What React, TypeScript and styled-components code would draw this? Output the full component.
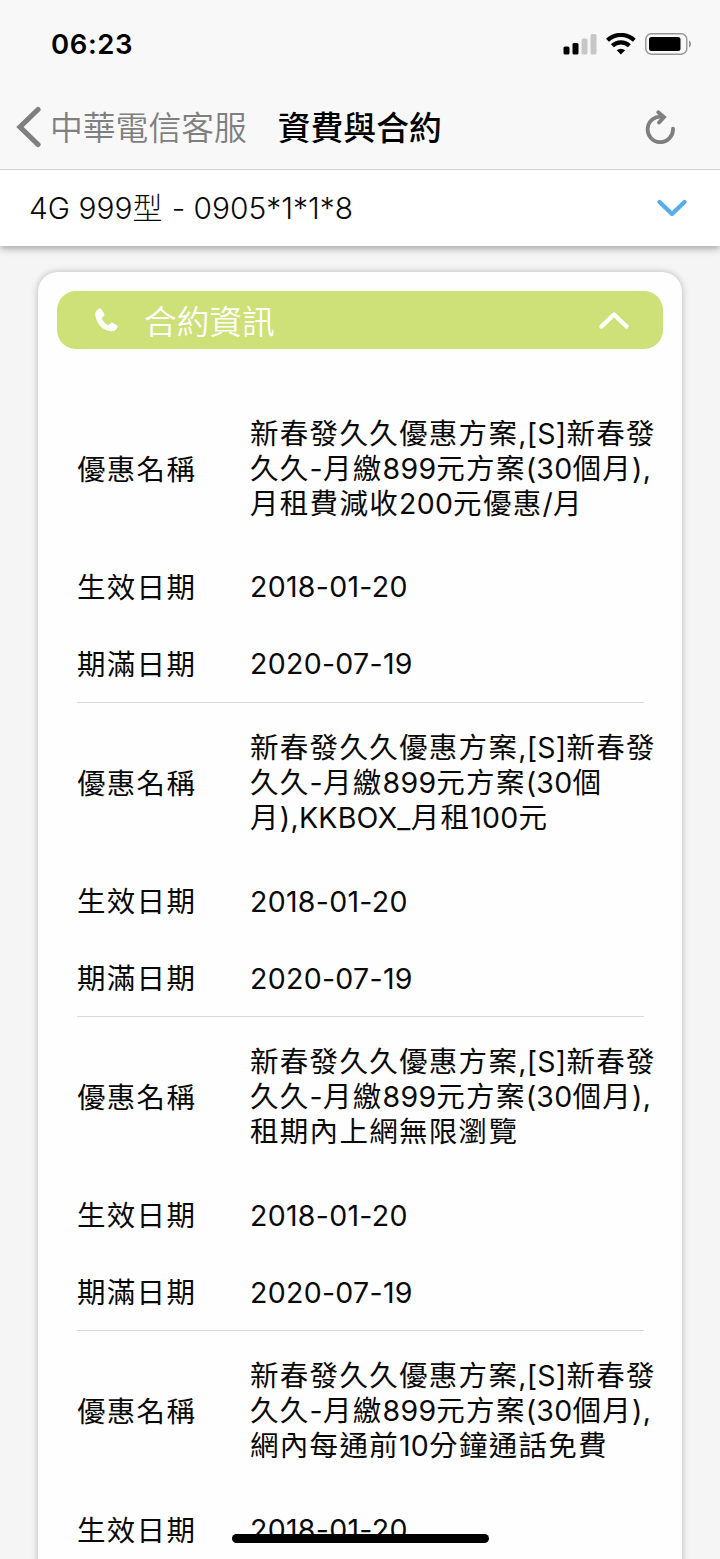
import React from 'react';
import styled, { createGlobalStyle } from 'styled-components';

const GlobalStyle = createGlobalStyle`
  * { box-sizing: border-box; }
  body { margin: 0; background: #f5f5f6; }
`;

const Screen = styled.div`
  position: relative;
  display: flex;
  flex-direction: column;
  width: 720px;
  height: 1559px;
  overflow: hidden;
  background: #f5f5f6;
  color: #0a0a0a;
  font-family: Inter, 'Noto Sans CJK TC', sans-serif;
  font-feature-settings: 'calt' 0;
  white-space: nowrap;
`;

const TopBar = styled.header`
  position: relative;
  z-index: 1;
  flex: none;
  height: 170px;
  background: #f8f8f8;
  border-bottom: 1px solid #cbcbcb;
`;

const StatusBar = styled.div`
  display: flex;
  align-items: center;
  justify-content: space-between;
  height: 88px;
  padding: 0 28px 0 51px;
`;

const Clock = styled.span`
  font-size: 27.5px;
  font-weight: 600;
  letter-spacing: 0.6px;
  color: #000;
`;

const NavBar = styled.nav`
  display: flex;
  align-items: center;
  height: 81px;
  padding: 0 45px 4px 16px;
`;

const BackLabel = styled.span`
  margin: 3px 0 0 8px;
  font-size: 32.8px;
  font-weight: 350;
  line-height: 40px;
  color: #7f7f7f;
`;

const NavTitle = styled.h1`
  flex: 1;
  margin: 3px 0 0 31px;
  font-size: 32.8px;
  font-weight: 500;
  line-height: 40px;
  color: #000;
`;

const PlanSelector = styled.div`
  flex: none;
  display: flex;
  align-items: center;
  justify-content: space-between;
  height: 76px;
  padding: 0 32px 0 29px;
  background: #fff;
  box-shadow: 0 2px 8px rgba(0, 0, 0, 0.38);
  font-size: 29.9px;
  font-weight: 300;
`;

const PlanName = styled.span`
  line-height: 36px;
  padding-bottom: 1px;
`;

const Card = styled.main`
  flex: none;
  width: 644px;
  height: 1400px;
  margin: 26px 0 0 38px;
  padding: 19px;
  border-radius: 20px;
  background: #fefefe;
  box-shadow: 0 0 7px rgba(0, 0, 0, 0.26);
`;

const SectionHeader = styled.div`
  display: flex;
  align-items: center;
  height: 58px;
  padding: 0 33px 0 36px;
  border-radius: 19px;
  background: #cee078;
  color: #fff;
`;

const SectionTitle = styled.h2`
  flex: 1;
  margin: 4px 0 0 25px;
  font-size: 32.7px;
  font-weight: 350;
  line-height: 40px;
`;

const OfferList = styled.div`
  margin: 39.7px 19px 0 20px;
`;

const Offer = styled.section`
  height: 314.2px;
  border-bottom: 1px solid #d8d8d8;
`;

const Row = styled.div<{ $height: number }>`
  display: grid;
  grid-template-columns: 173px 1fr;
  align-items: center;
  height: ${(p) => p.$height}px;
  font-size: 28.5px;
  line-height: 35px;
`;

const Label = styled.span`
  padding-top: 2px;
`;

const DateText = styled.span`
  padding-top: 1px;
  letter-spacing: 0.3px;
`;

const Line = styled.div`
  height: 35px;
  letter-spacing: 0.25px;
`;

const Han = styled.span<{ $spacing: number }>`
  letter-spacing: ${(p) => p.$spacing}px;
`;

const HomeIndicator = styled.div`
  position: absolute;
  left: 232px;
  bottom: 16px;
  width: 257px;
  height: 9px;
  border-radius: 5px;
  background: #000;
`;

const Icons = styled.svg`
  flex: none;
  display: block;
`;

/* Han characters are set slightly wider than the Latin text beside them. */
function Mixed({ text, spacing = 1.3 }: { text: string; spacing?: number }) {
  return (
    <>
      {text.split(/([\u4e00-\u9fff]+)/).map((part, i) =>
        i % 2 ? <Han key={i} $spacing={spacing}>{part}</Han> : part,
      )}
    </>
  );
}

const offers = [
  {
    name: ['新春發久久優惠方案,[S]新春發', '久久-月繳899元方案(30個月),', '月租費減收200元優惠/月'],
    start: '2018-01-20',
    end: '2020-07-19',
  },
  {
    name: ['新春發久久優惠方案,[S]新春發', '久久-月繳899元方案(30個', '月),KKBOX_月租100元'],
    start: '2018-01-20',
    end: '2020-07-19',
  },
  {
    name: ['新春發久久優惠方案,[S]新春發', '久久-月繳899元方案(30個月),', '租期內上網無限瀏覽'],
    start: '2018-01-20',
    end: '2020-07-19',
  },
  {
    name: ['新春發久久優惠方案,[S]新春發', '久久-月繳899元方案(30個月),', '網內每通前10分鐘通話免費'],
    start: '2018-01-20',
  },
];

function StatusIcons() {
  return (
    <Icons width="130" height="22" viewBox="0 0 130 22">
      <rect x="1.5" y="13.5" width="6" height="8" rx="1.5" />
      <rect x="10.5" y="10" width="6" height="11.5" rx="1.5" />
      <rect x="19.5" y="5.5" width="6" height="16" rx="1.5" fill="#c7c7c7" />
      <rect x="28.5" y="1" width="6" height="20.5" rx="1.5" fill="#c7c7c7" />
      <g fill="none" stroke="#000" strokeWidth="4.2">
        <path d="M45.5 7.3a19.3 19.3 0 0 1 26.8 0" />
        <path d="M50.4 12.8a12.4 12.4 0 0 1 17 0" />
      </g>
      <path d="M58.9 21.5l-4.2-4.2a6.3 6.3 0 0 1 8.4 0z" />
      <rect x="83.8" y="0.8" width="41" height="20.4" rx="5.5" fill="none" stroke="#959595" strokeWidth="1.4" />
      <rect x="87" y="4" width="31.5" height="14" rx="2.5" />
      <path d="M127 7.5c2.7 1.3 2.7 5.7 0 7z" fill="#959595" />
    </Icons>
  );
}

export default function App() {
  return (
    <Screen>
      <GlobalStyle />
      <TopBar>
        <StatusBar>
          <Clock>06:23</Clock>
          <StatusIcons />
        </StatusBar>
        <NavBar>
          <Icons width="26" height="42" viewBox="0 0 26 42">
            <path d="M22 3.5L4 21l18 17.5" fill="none" stroke="#7f7f7f" strokeWidth="5.2" strokeLinecap="round" />
          </Icons>
          <BackLabel>中華電信客服</BackLabel>
          <NavTitle>資費與合約</NavTitle>
          <Icons width="30" height="34" viewBox="0 0 30 34">
            <g fill="none" stroke="#7f7f7f" strokeWidth="3.8" strokeLinecap="round">
              <path d="M28 18.6A12.7 12.7 0 1 1 17.5 6.9" />
              <path d="M13.3 2.2l5.7 4.9-4.9 5.5" strokeLinejoin="miter" />
            </g>
          </Icons>
        </NavBar>
      </TopBar>
      <PlanSelector>
        <PlanName>4G 999<Mixed text="型" spacing={1} /> - 0905*1*1*8</PlanName>
        <Icons width="32" height="20" viewBox="0 0 32 20">
          <path d="M3.5 4L16 16 28.5 4" fill="none" stroke="#58aeea" strokeWidth="4.4" strokeLinecap="round" strokeLinejoin="round" />
        </Icons>
      </PlanSelector>
      <Card>
        <SectionHeader>
          <Icons width="26" height="26" viewBox="0 0 26 26">
            <path d="M6.2 1.5C4 2.7 2 4.8 2.3 8c.8 8.5 8 15.800 15.6 16.3 3.300.2 5.600-1.700 6.600-3.900.4-.9.200-1.400-.5-1.900l-4.100-2.800c-.7-.5-1.400-.4-2 .2l-1.700 1.800c-.5.5-1 .5-1.600.2-2.500-1.300-4.400-3.400-5.500-6-.3-.7-.2-1.200.4-1.700l1.400-1.300c.6-.6.700-1.100.3-1.900L8.500 2.200c-.6-1-1.300-1.300-2.300-.7z" fill="#fff" />
          </Icons>
          <SectionTitle>合約資訊</SectionTitle>
          <Icons width="32" height="22" viewBox="0 0 32 22">
            <path d="M3.5 17.5L16 5.5l12.5 12" fill="none" stroke="#fff" strokeWidth="4.4" strokeLinecap="round" strokeLinejoin="round" />
          </Icons>
        </SectionHeader>
        <OfferList>
          {offers.map((offer, i) => (
            <Offer key={i}>
              <Row $height={159.3}>
                <Label><Mixed text="優惠名稱" /></Label>
                <div>
                  {offer.name.map((line) => (
                    <Line key={line}><Mixed text={line} /></Line>
                  ))}
                </div>
              </Row>
              <Row $height={77}>
                <Label><Mixed text="生效日期" /></Label>
                <DateText>{offer.start}</DateText>
              </Row>
              {offer.end && (
                <Row $height={77}>
                  <Label><Mixed text="期滿日期" /></Label>
                  <DateText>{offer.end}</DateText>
                </Row>
              )}
            </Offer>
          ))}
        </OfferList>
      </Card>
      <HomeIndicator />
    </Screen>
  );
}
